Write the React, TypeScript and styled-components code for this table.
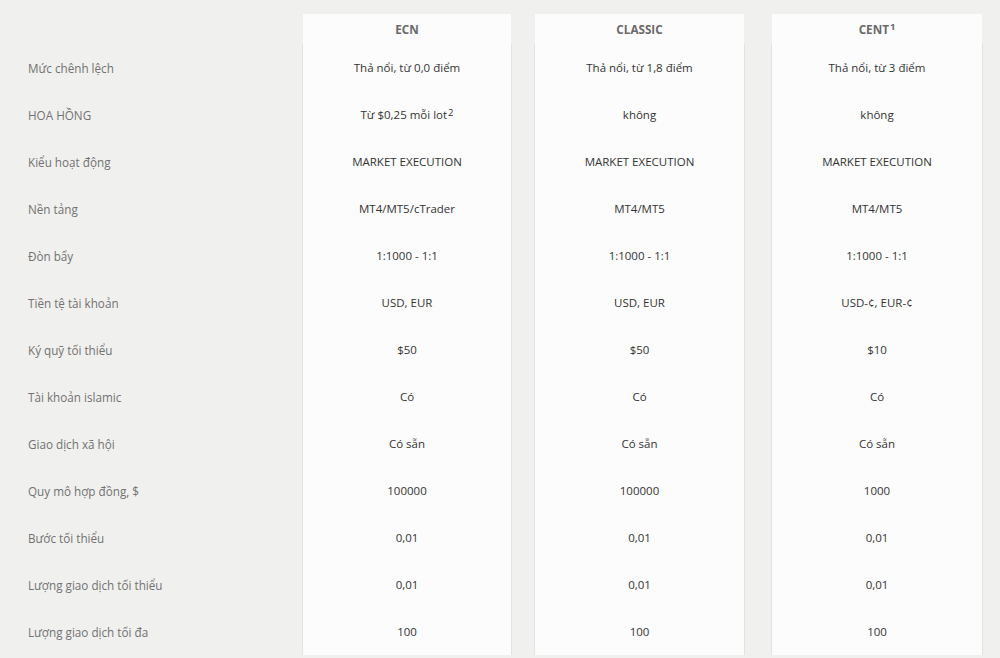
import React from "react";
import styled, { createGlobalStyle } from "styled-components";

const Global = createGlobalStyle`
  html, body { margin: 0; padding: 0; background: #f0f0ee; }
  body { font-family: "Open Sans", "Noto Sans", sans-serif; }
`;

const Page = styled.div`
  display: flex;
  align-items: flex-start;
  padding-top: 14px;
  height: 644px;
  overflow: hidden;
`;

const LabelCol = styled.div`
  width: 303px;
  flex: none;
  padding-top: 30px;
  box-sizing: border-box;
`;

const Label = styled.div`
  height: 47px;
  display: flex;
  align-items: center;
  padding-left: 28px;
  font-size: 11.7px;
  color: #727272;
`;

const Card = styled.div<{ $w: number; $ml: number }>`
  width: ${(p) => p.$w}px;
  margin-left: ${(p) => p.$ml}px;
  flex: none;
  background: #fcfcfc;
  display: flex;
  flex-direction: column;
`;

const Head = styled.div`
  height: 30px;
  display: flex;
  align-items: center;
  justify-content: center;
  font-size: 11.7px;
  font-weight: 700;
  color: #6a6a6a;
  text-transform: uppercase;
`;

const Body = styled.div`
  border-left: 1px solid #e2e2e2;
  border-right: 1px solid #e2e2e2;
  margin: 0 -1px;
`;

const Cell = styled.div`
  height: 47px;
  display: flex;
  align-items: center;
  justify-content: center;
  font-size: 11.5px;
  color: #333;
`;

const Sup = styled.sup`
  font-size: 9.5px;
  font-weight: inherit;
  line-height: 0;
  margin-left: 1px;
  position: relative;
  top: -2px;
`;

const labels = [
  "Mức chênh lệch",
  "HOA HỒNG",
  "Kiểu hoạt động",
  "Nền tảng",
  "Đòn bẩy",
  "Tiền tệ tài khoản",
  "Ký quỹ tối thiểu",
  "Tài khoản islamic",
  "Giao dịch xã hội",
  "Quy mô hợp đồng, $",
  "Bước tối thiểu",
  "Lượng giao dịch tối thiểu",
  "Lượng giao dịch tối đa",
];

type Col = {
  name: React.ReactNode;
  w: number;
  ml: number;
  values: React.ReactNode[];
};

const cols: Col[] = [
  {
    name: "ECN",
    w: 208,
    ml: 0,
    values: [
      "Thả nổi, từ 0,0 điểm",
      <>Từ $0,25 mỗi lot<Sup>2</Sup></>,
      "MARKET EXECUTION",
      "MT4/MT5/cTrader",
      "1:1000 - 1:1",
      "USD, EUR",
      "$50",
      "Có",
      "Có sẵn",
      "100000",
      "0,01",
      "0,01",
      "100",
    ],
  },
  {
    name: "CLASSIC",
    w: 209,
    ml: 24,
    values: [
      "Thả nổi, từ 1,8 điểm",
      "không",
      "MARKET EXECUTION",
      "MT4/MT5",
      "1:1000 - 1:1",
      "USD, EUR",
      "$50",
      "Có",
      "Có sẵn",
      "100000",
      "0,01",
      "0,01",
      "100",
    ],
  },
  {
    name: <>CENT<Sup>1</Sup></>,
    w: 210,
    ml: 28,
    values: [
      "Thả nổi, từ 3 điểm",
      "không",
      "MARKET EXECUTION",
      "MT4/MT5",
      "1:1000 - 1:1",
      "USD-¢, EUR-¢",
      "$10",
      "Có",
      "Có sẵn",
      "1000",
      "0,01",
      "0,01",
      "100",
    ],
  },
];

export default function App() {
  return (
    <>
      <Global />
      <Page>
        <LabelCol>
          {labels.map((l) => (
            <Label key={l}>{l}</Label>
          ))}
        </LabelCol>
        {cols.map((c, i) => (
          <Card key={i} $w={c.w} $ml={c.ml}>
            <Head>{c.name}</Head>
            <Body>
              {c.values.map((v, j) => (
                <Cell key={j}>{v}</Cell>
              ))}
            </Body>
          </Card>
        ))}
      </Page>
    </>
  );
}
